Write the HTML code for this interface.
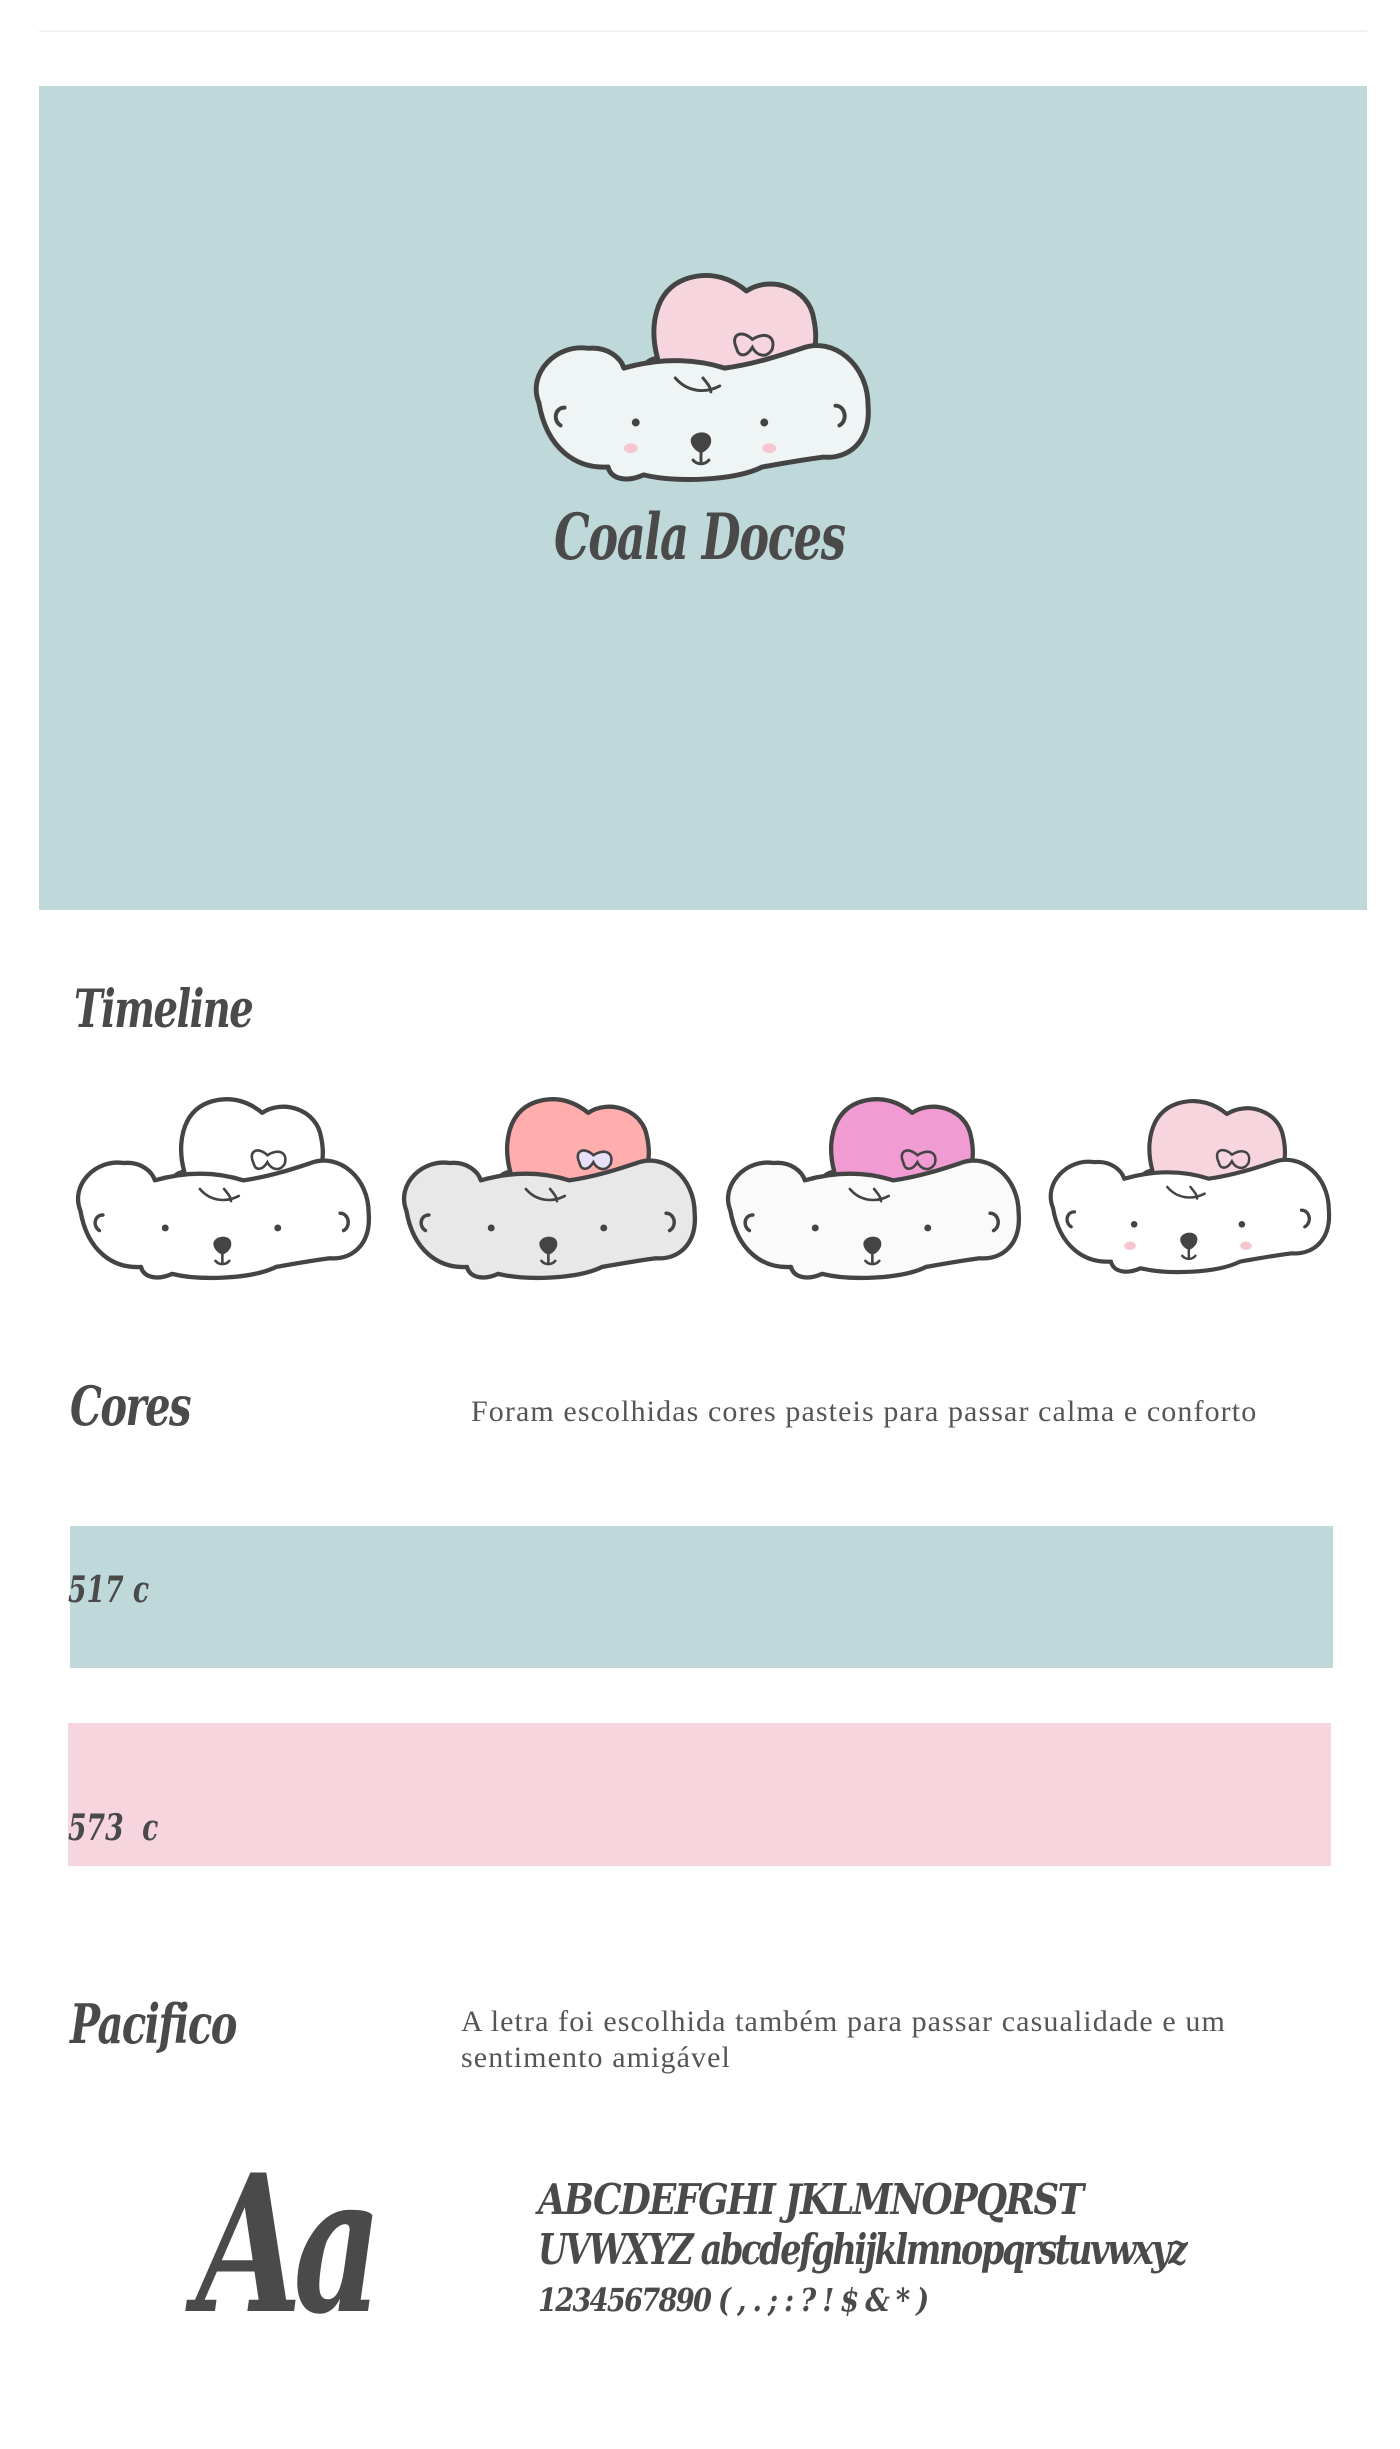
<!DOCTYPE html>
<html><head><meta charset="utf-8">
<style>
html,body{margin:0;padding:0;background:#fff;}
body{width:1400px;height:2449px;position:relative;overflow:hidden;font-family:"Liberation Serif",serif;color:#4a4a4a;}
.abs{position:absolute;}
.script{font-family:"DejaVu Serif","Liberation Serif",serif;font-style:italic;font-weight:bold;color:#4a4a4a;letter-spacing:-2px;transform:scaleX(0.74);transform-origin:0 0;white-space:nowrap;}
.para{font-family:"Liberation Serif",serif;color:#555;font-size:30px;line-height:36px;letter-spacing:1.1px;white-space:nowrap;}
svg.k{position:absolute;overflow:visible;}
</style></head><body>
<svg width="0" height="0" style="position:absolute">
<defs>
<symbol id="koala" viewBox="0 0 350 220">
 <path d="M128,112 C112,104 118,92 132,90 C124,60 128,22 160,10 C188,0 210,12 222,22 C246,6 285,18 290,50 C296,78 288,100 272,106 L270,122 C230,132 160,130 128,112 Z" fill="var(--hat)" stroke="#444" stroke-width="5" stroke-linejoin="round"/>
 <path d="M212,80 C205,65 218,61 228,71 C240,63 252,67 248,81 C242,91 232,87 228,79 C222,89 214,89 212,80 Z" fill="var(--bow)" stroke="#444" stroke-width="3"/>
 <path d="M12,135 C0,105 30,75 62,80 C82,78 95,90 98,100 C140,88 175,92 200,100 C230,96 260,86 278,80 C310,68 345,96 345,138 C348,175 325,192 300,190 C270,194 250,198 238,200 C210,214 150,216 118,208 C100,216 85,212 82,200 C50,202 20,182 12,135 Z" fill="var(--body)" stroke="#444" stroke-width="5" stroke-linejoin="round"/>
 <path d="M150,110 C162,124 180,126 195,118 M178,110 C183,116 186,120 186,124" fill="none" stroke="#444" stroke-width="3" stroke-linecap="round"/>
 <path d="M38,140 C28,140 26,153 34,158 M312,138 C322,138 325,153 316,158" fill="none" stroke="#444" stroke-width="4" stroke-linecap="round"/>
 <circle cx="110" cy="155" r="4" fill="#444"/><circle cx="240" cy="155" r="4" fill="#444"/>
 <ellipse cx="105" cy="181" rx="7" ry="5" fill="var(--cheek)"/><ellipse cx="245" cy="181" rx="7" ry="5" fill="var(--cheek)"/>
 <path d="M166,171 C170,163 184,163 186,171 C188,179 180,185 176,186 C170,184 164,177 166,171 Z" fill="#444"/>
 <path d="M176,186 L176,195 M168,193 C172,198 180,198 184,193" fill="none" stroke="#444" stroke-width="3" stroke-linecap="round"/>
</symbol>
</defs></svg>

<div class="abs" style="left:39px;top:30px;width:1328px;height:2px;background:#f3f3f3"></div>
<div class="abs" style="left:39px;top:86px;width:1328px;height:824px;background:#bfd9db"></div>

<svg class="k" style="left:527px;top:268px;width:346px;height:220px;--hat:#f7d5df;--bow:#f7d5df;--body:#eff5f5;--cheek:#f5c6d0"><use href="#koala"/></svg>
<div class="abs script" style="left:554px;top:498px;font-size:64px;line-height:80px;transform:scaleX(0.7);">Coala Doces</div>

<div class="abs script" style="left:74px;top:978px;font-size:52px;line-height:64px;">Timeline</div>

<svg class="k" style="left:70px;top:1090px;width:303px;height:198px;--hat:#fff;--bow:#fff;--body:#fff;--cheek:#fff"><use href="#koala"/></svg>
<svg class="k" style="left:396px;top:1090px;width:303px;height:198px;--hat:#ffadad;--bow:#e8e0f8;--body:#e8e8e8;--cheek:#e8e8e8"><use href="#koala"/></svg>
<svg class="k" style="left:720px;top:1090px;width:303px;height:198px;--hat:#f19bd3;--bow:#f19bd3;--body:#fafafa;--cheek:#fafafa"><use href="#koala"/></svg>
<svg class="k" style="left:1043px;top:1092px;width:290px;height:190px;--hat:#f7d5df;--bow:#f7d5df;--body:#fff;--cheek:#f5c6d0"><use href="#koala"/></svg>

<div class="abs script" style="left:70px;top:1374px;font-size:54px;line-height:64px;">Cores</div>
<div class="abs para" style="left:471px;top:1394px;">Foram escolhidas cores pasteis para passar calma e conforto</div>

<div class="abs" style="left:70px;top:1526px;width:1263px;height:142px;background:#bfd9db"></div>
<div class="abs script" style="left:68px;top:1570px;font-size:36px;line-height:40px;letter-spacing:0;">517 c</div>
<div class="abs" style="left:68px;top:1723px;width:1263px;height:143px;background:#f6d5df"></div>
<div class="abs script" style="left:68px;top:1808px;font-size:36px;line-height:40px;letter-spacing:0;">573&nbsp; c</div>

<div class="abs script" style="left:70px;top:1992px;font-size:54px;line-height:64px;">Pacifico</div>
<div class="abs para" style="left:461px;top:2004px;">A letra foi escolhida também para passar casualidade e um<br>sentimento amigável</div>

<div class="abs script" style="left:196px;top:2140px;font-size:190px;line-height:210px;letter-spacing:-12px;transform:scaleX(0.72);">Aa</div>
<div class="abs script" style="left:538px;top:2176px;font-size:42px;line-height:48px;letter-spacing:-2px;transform:scaleX(0.85);">ABCDEFGHI JKLMNOPQRST</div>
<div class="abs script" style="left:538px;top:2226px;font-size:42px;line-height:48px;letter-spacing:-3px;transform:scaleX(0.8);">UVWXYZ abcdefghijklmnopqrstuvwxyz</div>
<div class="abs script" style="left:538px;top:2280px;font-size:32px;line-height:40px;letter-spacing:-2px;transform:scaleX(0.85);">1234567890 ( , . ; : ? ! $ &amp; * )</div>
</body></html>
